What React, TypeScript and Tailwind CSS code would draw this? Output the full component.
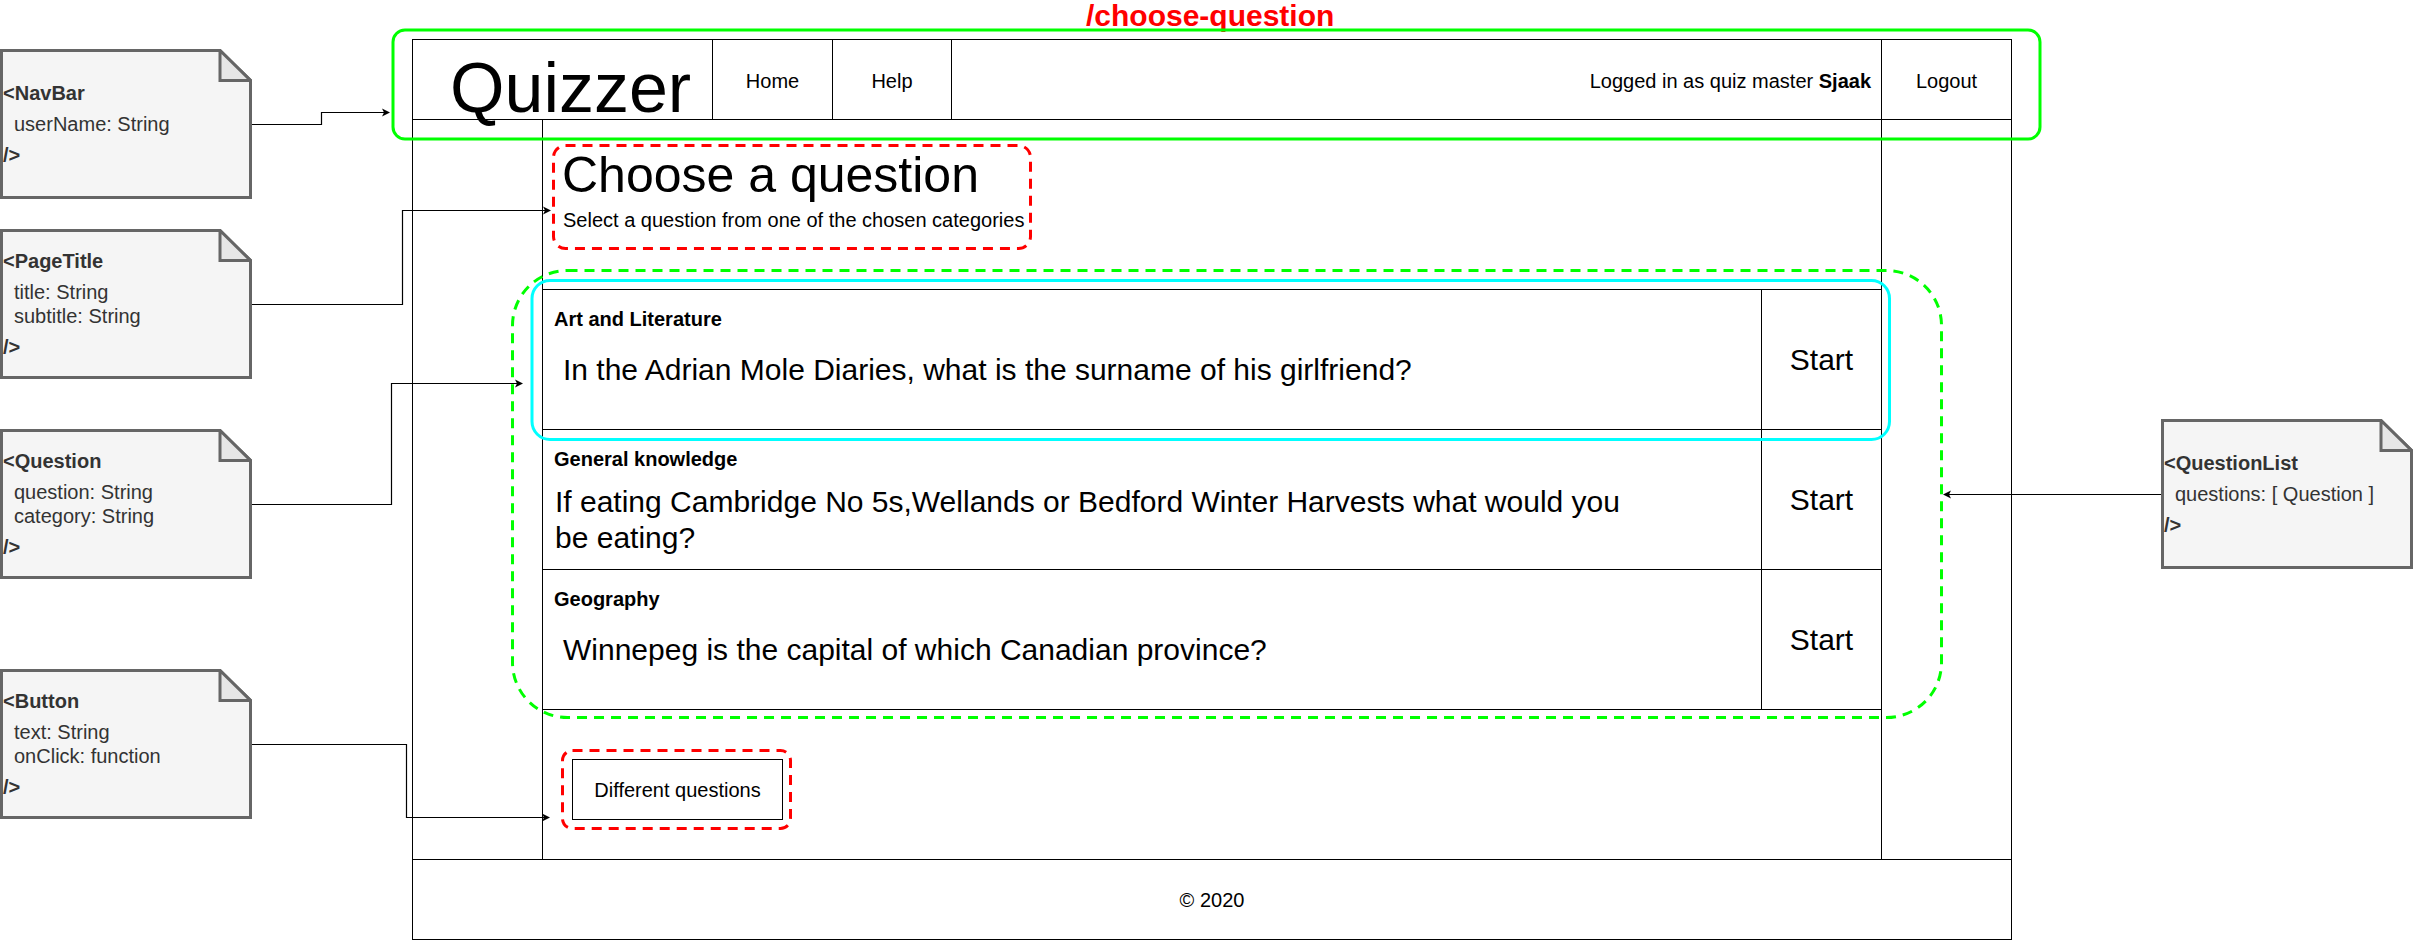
import React from "react";

type NoteProps = {
  title: string;
  fields: string[];
  className: string;
};

// drawio style "note" shape with folded corner
function Note({ title, fields, className }: NoteProps) {
  return (
    <div className={`absolute h-[150px] w-[252px] ${className}`}>
      <svg className="absolute inset-0" width="252" height="150" viewBox="0 0 252 150">
        <path d="M1.5 1.5H220L250.5 31.5V148.5H1.5Z" fill="#f5f5f5" stroke="#666666" strokeWidth="3" />
        <path d="M220 1.5V31.5H250.5Z" fill="#e6e6e6" stroke="#666666" strokeWidth="3" />
      </svg>
      <div className="relative flex h-full flex-col justify-center text-[20px] leading-[24px] text-[#333333]">
        <div className="pl-[3px] font-bold">&lt;{title}</div>
        <div className="mt-[7px] pl-[14px]">
          {fields.map((f) => (
            <div key={f}>{f}</div>
          ))}
        </div>
        <div className="mt-[7px] pl-[3px] font-bold">/&gt;</div>
      </div>
    </div>
  );
}

const questions = [
  {
    category: "Art and Literature",
    text: "In the Adrian Mole Diaries, what is the surname of his girlfriend?",
    pad: "pl-[20px] mt-[21px]",
  },
  {
    category: "General knowledge",
    text: "If eating Cambridge No 5s,Wellands or Bedford Winter Harvests what would you be eating?",
    pad: "pl-[12px] mt-[13px]",
  },
  {
    category: "Geography",
    text: "Winnepeg is the capital of which Canadian province?",
    pad: "pl-[20px] mt-[21px]",
  },
];

function Arrow({ x, y, dir = "right" }: { x: number; y: number; dir?: "right" | "left" }) {
  const s = dir === "right" ? 1 : -1;
  const pts = `${x},${y} ${x - 8 * s},${y - 4} ${x - 6 * s},${y} ${x - 8 * s},${y + 4}`;
  return <polygon points={pts} fill="#000000" />;
}

export default function App() {
  return (
    <div className="relative h-[940px] w-[2413px] overflow-hidden bg-white font-['Liberation_Sans',Arial,sans-serif] text-black">
      {/* route label */}
      <div className="absolute left-[1086px] top-[-2px] text-[30px] font-bold leading-[36px] text-[#ff0000]">
        /choose-question
      </div>

      {/* wireframe */}
      <div className="absolute left-[412px] top-[39px] flex h-[901px] w-[1600px] flex-col border border-black">
        <nav className="flex h-[80px] border-b border-black text-[20px] leading-[24px]">
          <div className="flex w-[300px] items-end border-r border-black pl-[37px]">
            <span className="-mb-[4px] text-[70px] leading-[70px]">Quizzer</span>
          </div>
          <div className="flex w-[120px] items-center justify-center border-r border-black pt-[2px]">Home</div>
          <div className="flex w-[119px] items-center justify-center border-r border-black pt-[2px]">Help</div>
          <div className="flex flex-1 items-center justify-end border-r border-black pr-[10px] pt-[2px]">
            <span>
              Logged in as quiz master <b>Sjaak</b>
            </span>
          </div>
          <div className="flex w-[129px] items-center justify-center pt-[2px]">Logout</div>
        </nav>

        <div className="flex flex-1">
          <div className="w-[130px] border-r border-black" />
          <main className="flex w-[1339px] flex-col border-r border-black">
            <div className="pl-[19px] pt-[30px]">
              <h1 className="text-[50px] leading-[50px]">Choose a question</h1>
              <p className="mt-[8px] pl-[1px] text-[20px] leading-[24px]">
                Select a question from one of the chosen categories
              </p>
            </div>

            <div className="mt-[57px] border-b border-black">
              {questions.map((q) => (
                <div key={q.category} className="flex h-[140px] border-t border-black">
                  <div className="flex-1 border-r border-black">
                    <div className="pl-[11px] pt-[17px] text-[20px] font-bold leading-[24px]">{q.category}</div>
                    <div className={`max-w-[1085px] text-[30px] leading-[36px] ${q.pad}`}>{q.text}</div>
                  </div>
                  <div className="flex w-[119px] items-center justify-center text-[30px] leading-[36px]">Start</div>
                </div>
              ))}
            </div>

            <button className="ml-[29px] mt-[49px] flex h-[61px] w-[211px] items-center justify-center border border-black text-[20px] leading-[24px]">
              Different questions
            </button>
          </main>
          <div className="flex-1" />
        </div>

        <footer className="flex h-[80px] items-center justify-center border-t border-black text-[20px] leading-[24px]">
          © 2020
        </footer>
      </div>

      {/* component notes */}
      <Note title="NavBar" fields={["userName: String"]} className="left-0 top-[49px]" />
      <Note title="PageTitle" fields={["title: String", "subtitle: String"]} className="left-0 top-[229px]" />
      <Note title="Question" fields={["question: String", "category: String"]} className="left-0 top-[429px]" />
      <Note title="Button" fields={["text: String", "onClick: function"]} className="left-0 top-[669px]" />
      <Note title="QuestionList" fields={["questions: [ Question ]"]} className="left-[2161px] top-[419px]" />

      {/* annotations and connectors */}
      <svg className="pointer-events-none absolute inset-0" width="2413" height="940" viewBox="0 0 2413 940">
        <rect x="393" y="30" width="1647" height="109" rx="12" fill="none" stroke="#00ff00" strokeWidth="3" />
        <rect x="553.5" y="145.5" width="477" height="103" rx="12" fill="none" stroke="#ff0000" strokeWidth="3" strokeDasharray="10 7" />
        <rect x="512.5" y="270.5" width="1429" height="447" rx="55" fill="none" stroke="#00ff00" strokeWidth="3" strokeDasharray="10 7" />
        <rect x="532" y="280.5" width="1357.5" height="159" rx="18" fill="none" stroke="#00ffff" strokeWidth="3" />
        <rect x="562.5" y="750.5" width="228" height="78" rx="10" fill="none" stroke="#ff0000" strokeWidth="3" strokeDasharray="10 7" />

        <g fill="none" stroke="#000000" strokeWidth="1.2">
          <path d="M252 124.5H321.5V112.5H384" />
          <path d="M252 304.5H402.5V210.5H545" />
          <path d="M252 504.5H391.5V383.5H517" />
          <path d="M252 744.5H406.5V817.5H544" />
          <path d="M2161 494.5H1949" />
        </g>
        <Arrow x={390} y={112.5} />
        <Arrow x={551} y={210.5} />
        <Arrow x={523} y={383.5} />
        <Arrow x={550} y={817.5} />
        <Arrow x={1943} y={494.5} dir="left" />
      </svg>
    </div>
  );
}
